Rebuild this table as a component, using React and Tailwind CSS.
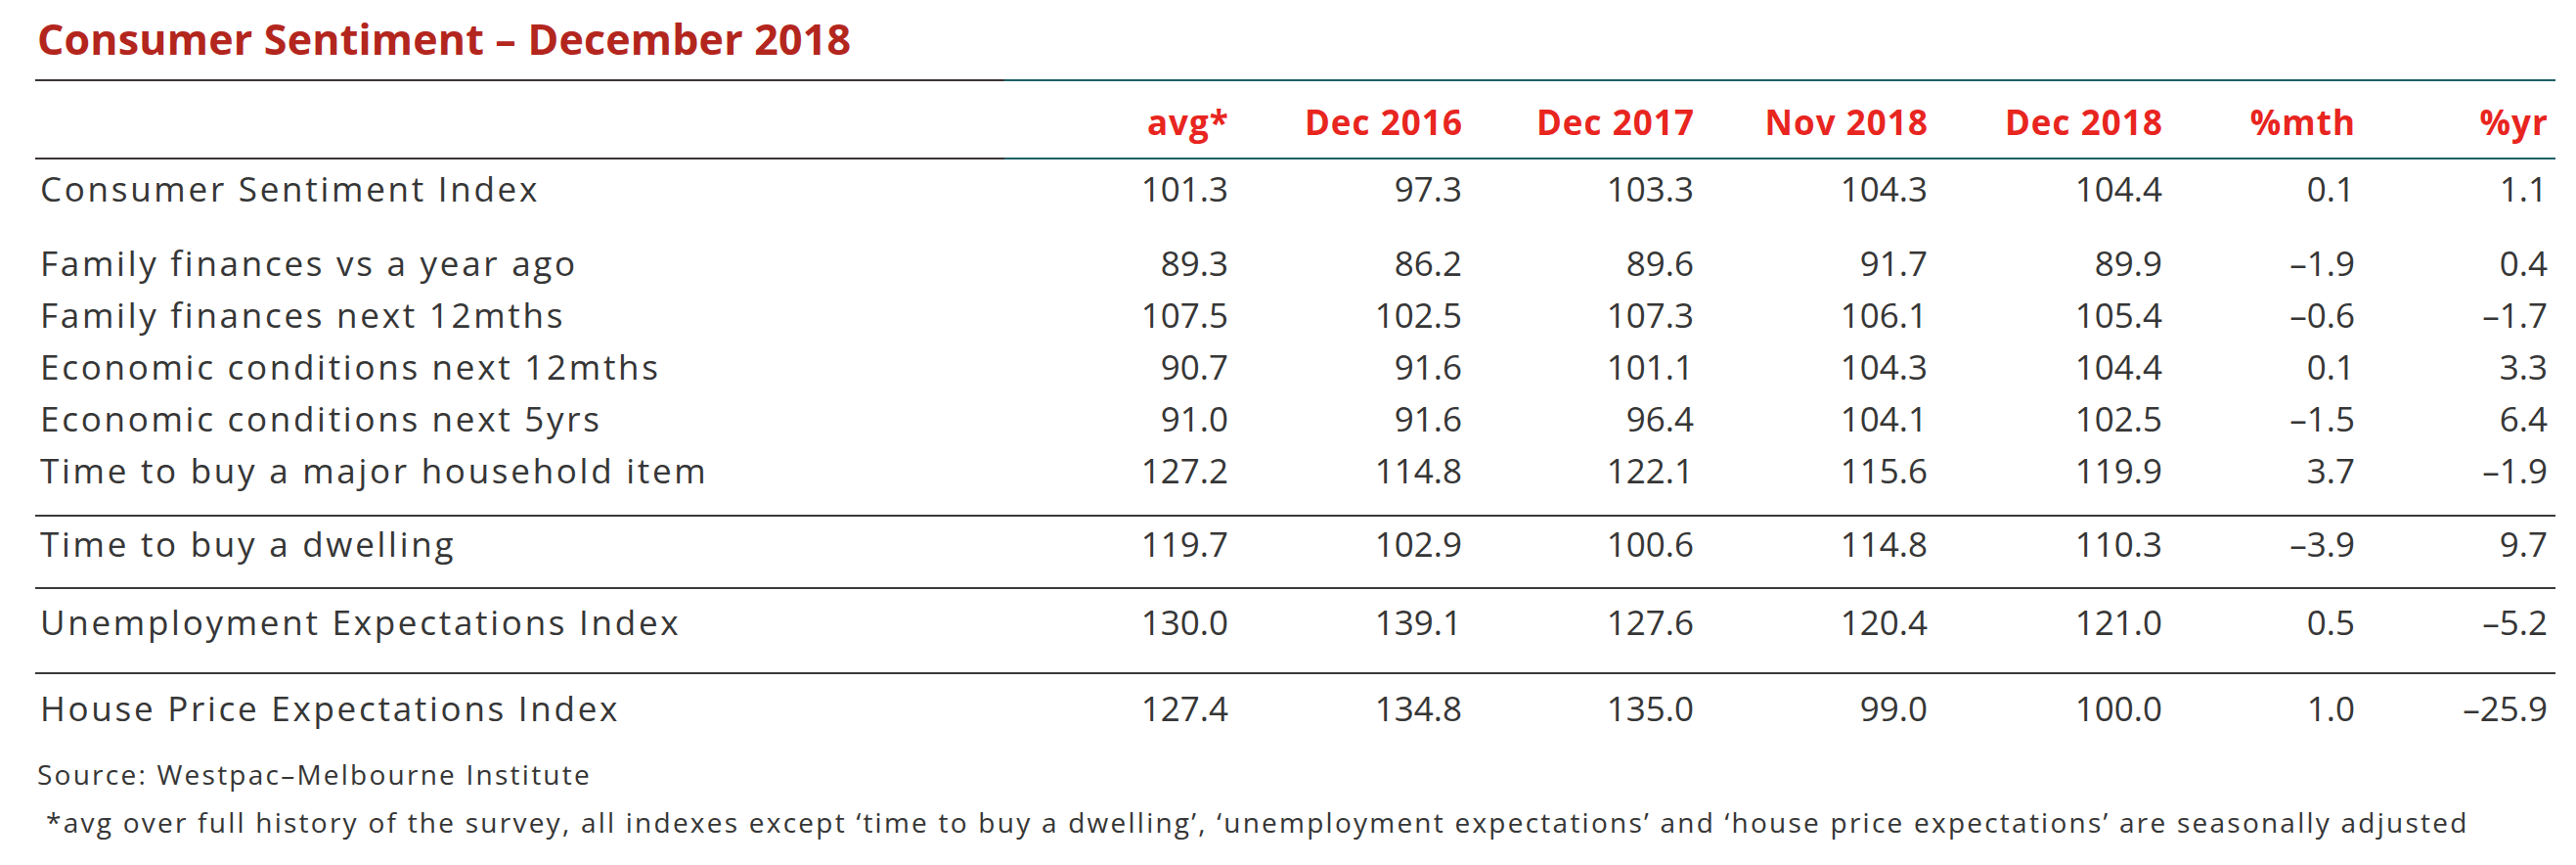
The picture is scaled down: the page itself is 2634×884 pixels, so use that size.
const columns = ["avg*", "Dec 2016", "Dec 2017", "Nov 2018", "Dec 2018", "%mth", "%yr"];

const grid = "grid grid-cols-[991px_229px_239px_237px_239px_240px_197px_197px] w-[2569px]";

function Row({ label, values }) {
  return (
    <div className={`${grid} h-[53px] items-center text-[35px] leading-none text-[#363636]`}>
      <div className="pl-[5px] tracking-[0.078em]">{label}</div>
      {values.map((v, i) => (
        <div key={i} className="text-right">
          {v}
        </div>
      ))}
    </div>
  );
}

function SplitLine() {
  return (
    <div className="flex h-[2px]">
      <div className="w-[991px] bg-[#3b3434]" />
      <div className="flex-1 bg-[#1f5f66]" />
    </div>
  );
}

function Line() {
  return <div className="h-[2px] bg-[#3a3a3a]" />;
}

function App() {
  return (
    <div className="bg-white w-[2634px] h-[884px] pl-[36px] pt-[12px] font-['Open_Sans',sans-serif]">
      <h1 className="h-[56px] pl-[2px] text-[43px] leading-[56px] font-bold tracking-[0.004em] text-[#b3261e]">
        Consumer Sentiment – December 2018
      </h1>

      <div className="mt-[13px] w-[2577px]">
        <SplitLine />
        <div className={`${grid} h-[78px] items-center pt-[4px] text-[35px] leading-none font-bold text-[#e8251f] tracking-[0.03em]`}>
          <div />
          {columns.map((c) => (
            <div key={c} className="text-right mr-[-1px]">
              {c}
            </div>
          ))}
        </div>
        <SplitLine />

        {/* headline index */}
        <div className="h-[58px] flex items-center">
          <Row label="Consumer Sentiment Index" values={["101.3", "97.3", "103.3", "104.3", "104.4", "0.1", "1.1"]} />
        </div>

        {/* sub-indexes */}
        <div className="pt-[21px] pb-[19px]">
          <Row label="Family finances vs a year ago" values={["89.3", "86.2", "89.6", "91.7", "89.9", "–1.9", "0.4"]} />
          <Row label="Family finances next 12mths" values={["107.5", "102.5", "107.3", "106.1", "105.4", "–0.6", "–1.7"]} />
          <Row label="Economic conditions next 12mths" values={["90.7", "91.6", "101.1", "104.3", "104.4", "0.1", "3.3"]} />
          <Row label="Economic conditions next 5yrs" values={["91.0", "91.6", "96.4", "104.1", "102.5", "–1.5", "6.4"]} />
          <Row label="Time to buy a major household item" values={["127.2", "114.8", "122.1", "115.6", "119.9", "3.7", "–1.9"]} />
        </div>
        <Line />

        <div className="pt-[1px] pb-[18px]">
          <Row label="Time to buy a dwelling" values={["119.7", "102.9", "100.6", "114.8", "110.3", "–3.9", "9.7"]} />
        </div>
        <Line />

        <div className="pt-[7px] pb-[25px]">
          <Row label="Unemployment Expectations Index" values={["130.0", "139.1", "127.6", "120.4", "121.0", "0.5", "–5.2"]} />
        </div>
        <Line />

        <div className="pt-[8px]">
          <Row label="House Price Expectations Index" values={["127.4", "134.8", "135.0", "99.0", "100.0", "1.0", "–25.9"]} />
        </div>
      </div>

      {/* notes */}
      <div className="mt-[21px] text-[28px] leading-[40px] text-[#363636] tracking-[0.08em]">
        <p className="pl-[2px]">Source: Westpac–Melbourne Institute</p>
        <p className="pl-[11px] mt-[9px]">
          *avg over full history of the survey, all indexes except ‘time to buy a dwelling’, ‘unemployment expectations’ and
          ‘house price expectations’ are seasonally adjusted
        </p>
      </div>
    </div>
  );
}

export default App;
